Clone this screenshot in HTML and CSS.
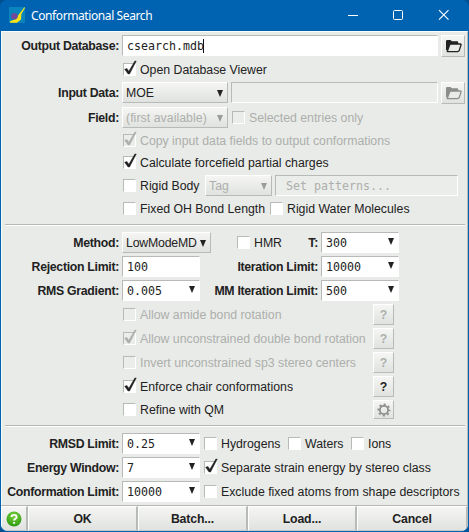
FILE: index.html
```html
<!DOCTYPE html>
<html lang="en">
<head>
<meta charset="utf-8">
<title>Conformational Search</title>
<link rel="stylesheet" href="styles.css">
</head>
<body>
<svg class="defs" width="0" height="0">
  <symbol id="tick" viewBox="0 0 14 15"><path d="M1.6 9.2 L4 8.4 L5.8 11.2 L11.8 1 L13.3 1 L6.6 14 L5 14 Z" fill="currentColor" stroke="currentColor" stroke-width=".4"/></symbol>
  <symbol id="folder" viewBox="0 0 17 14"><path d="M1 11 V2.2 Q1 1 2.2 1 H5.4 L7 2.3 H12.2 Q13.2 2.3 13.2 3.6 V5 H5.2 L2.4 11.8 Z" fill="currentColor"/><path d="M5 5 H15.4 Q16.4 5 16 6 L14.2 11.6 Q13.8 12.6 12.6 12.6 H2.2 Z" fill="#e9ebe8" stroke="currentColor" stroke-width="1.3" stroke-linejoin="round"/></symbol>
</svg>
<div class="window">
  <header class="titlebar">
    <svg class="logo" width="16" height="16" viewBox="0 0 16 16"><rect width="16" height="16" rx="1" fill="#0a84bd"/><path d="M15.6 0 L9.4 8 L7 12 L1 14.2 V15.8 H8 L12 12.5 L12.4 7 L16 1 Z" fill="#fbe416"/><circle cx="5.4" cy="9.3" r="3.3" fill="#704b9b"/></svg>
    <span class="title">Conformational Search</span>
    <svg class="winctl" width="104" height="14" viewBox="0 0 104 14" fill="none" stroke="#fff"><path d="M1 7.5 H11"/><rect x="46.5" y="2.5" width="9" height="9" rx="1"/><path d="M92 2.2 L101.5 11.7 M101.5 2.2 L92 11.7" stroke-width="1.1"/></svg>
  </header>
  <main class="form">
    <div class="row"><b class="label">Output Database:</b><div class="field wide">csearch.mdb<i class="caret"></i></div><button class="btn browse"><svg width="17" height="14"><use href="#folder"/></svg></button></div>
    <div class="row lone"><label class="check"><i class="box"><svg><use href="#tick"/></svg></i><span>Open Database Viewer</span></label></div>
    <div class="row"><b class="label">Input Data:</b><div class="btn select">MOE<i class="arrow"></i></div><div class="field off source"></div><button class="btn browse off"><svg width="17" height="14"><use href="#folder"/></svg></button></div>
    <div class="row"><b class="label">Field:</b><div class="btn select off first">(first available)<i class="arrow"></i></div><label class="check off selected"><i class="box"></i><span>Selected entries only</span></label></div>
    <div class="row lone"><label class="check off"><i class="box"><svg><use href="#tick"/></svg></i><span>Copy input data fields to output conformations</span></label></div>
    <div class="row lone"><label class="check"><i class="box"><svg><use href="#tick"/></svg></i><span>Calculate forcefield partial charges</span></label></div>
    <div class="row lone"><label class="check rigid"><i class="box"></i><span>Rigid Body</span></label><div class="btn select tag off">Tag<i class="arrow"></i></div><div class="field off patterns">Set patterns...</div></div>
    <div class="row lone"><label class="check bond"><i class="box"></i><span>Fixed OH Bond Length</span></label><label class="check"><i class="box"></i><span>Rigid Water Molecules</span></label></div>
    <hr>
    <div class="row pair"><b class="label">Method:</b><div class="btn select method">LowModeMD<i class="arrow"></i></div><label class="check hmr"><i class="box"></i><span>HMR</span></label><b class="label second">T:</b><div class="field num">300<i class="arrow"></i></div></div>
    <div class="row pair"><b class="label">Rejection Limit:</b><div class="field num">100</div><b class="label second">Iteration Limit:</b><div class="field num">10000<i class="arrow"></i></div></div>
    <div class="row pair"><b class="label">RMS Gradient:</b><div class="field num">0.005<i class="arrow"></i></div><b class="label second">MM Iteration Limit:</b><div class="field num">500<i class="arrow"></i></div></div>
    <div class="row lone option"><label class="check off"><i class="box"></i><span>Allow amide bond rotation</span></label><button class="btn help off">?</button></div>
    <div class="row lone option"><label class="check off"><i class="box"><svg><use href="#tick"/></svg></i><span>Allow unconstrained double bond rotation</span></label><button class="btn help off">?</button></div>
    <div class="row lone option"><label class="check off"><i class="box"></i><span>Invert unconstrained sp3 stereo centers</span></label><button class="btn help off">?</button></div>
    <div class="row lone option"><label class="check"><i class="box"><svg><use href="#tick"/></svg></i><span>Enforce chair conformations</span></label><button class="btn help">?</button></div>
    <div class="row lone option"><label class="check"><i class="box"></i><span>Refine with QM</span></label><button class="btn help gear"><svg width="14" height="14" viewBox="-7 -7 14 14" fill="none" stroke="#8d8f8c"><circle r="4.1" stroke-width="1.8"/><circle r="5.7" stroke-width="1.6" stroke-dasharray="2.2 2.277" stroke-dashoffset="1.1"/></svg></button></div>
    <hr>
    <div class="row"><b class="label">RMSD Limit:</b><div class="field num">0.25<i class="arrow"></i></div><label class="check after hyd"><i class="box"></i><span>Hydrogens</span></label><label class="check wat"><i class="box"></i><span>Waters</span></label><label class="check"><i class="box"></i><span>Ions</span></label></div>
    <div class="row"><b class="label">Energy Window:</b><div class="field num">7<i class="arrow"></i></div><label class="check after"><i class="box"><svg><use href="#tick"/></svg></i><span>Separate strain energy by stereo class</span></label></div>
    <div class="row"><b class="label">Conformation Limit:</b><div class="field num">10000<i class="arrow"></i></div><label class="check after"><i class="box"></i><span>Exclude fixed atoms from shape descriptors</span></label></div>
  </main>
  <footer class="actions">
    <button><svg width="16" height="16" viewBox="0 0 16 16"><defs><radialGradient id="g" cx=".5" cy=".3" r=".7"><stop offset="0" stop-color="#7cd33c"/><stop offset="1" stop-color="#2c9a12"/></radialGradient></defs><circle cx="8" cy="8" r="7.5" fill="url(#g)"/><path d="M5.5 6.1 Q5.5 3.9 8 3.9 Q10.6 3.9 10.6 6 Q10.6 7.2 9.2 7.9 Q8.1 8.5 8.1 9.6 M8.1 10.9 V12.7" fill="none" stroke="#fff" stroke-width="1.9"/></svg></button>
    <button>OK</button><button>Batch...</button><button>Load...</button><button>Cancel</button>
  </footer>
</div>
</body>
</html>
```
FILE: styles.css
```css
* { box-sizing: border-box; }
body { margin: 0; background: #004f8f; overflow: hidden; }
.defs { position: absolute; }
.window {
  width: 469px; height: 532px; padding: 0 1px 1px;
  background: #0063b1; border-radius: 7px; overflow: hidden;
  font: 12.3px/22px "Liberation Sans", sans-serif; color: #222;
}
.titlebar { height: 31px; display: flex; align-items: center; padding: 0 17px 1px 8px; color: #fff; }
.title { font: 12px/16px "Noto Sans", sans-serif; letter-spacing: -.4px; margin: 1px 0 0 6px; }
.winctl { margin-left: auto; }
.form {
  display: grid; align-items: start; height: 474px; padding-top: 3px;
  grid-template-rows: 24px 23px 25px 23px 22px 23px 23px 26px 8px repeat(6, 24px) 23px 26px 8px repeat(3, 24px);
  background: #e9ebe8; border: solid #fafbfa; border-width: 1px 0 0 1px;
  border-right: 1px solid #b9bbb8;
}
.row { display: flex; height: 21px; margin-left: -2px; white-space: nowrap; }
.lone { padding-left: 122px; }
.pair { width: 399px; }
.option { width: 394px; }
hr { margin: 0 2px 0 3px; border: 0; height: 2px; border-top: 1px solid #b5b7b4; background: #fff; }
.label { width: 119px; margin-right: 3px; text-align: right; flex: none; letter-spacing: -.3px; }
.second { width: auto; margin-left: auto; }
.field, .btn { height: 21px; flex: none; }
.field {
  position: relative; padding-left: 4px; background: #fefffe; border: solid; border-width: 1px;
  border-color: #b8bab7 #fefffe #fefffe #b8bab7;
  font: 11.63px/21px "DejaVu Sans Mono", monospace;
}
.field.off { background: #ebedea; color: #adafac; }
.wide { width: 316px; }
.source { width: 207px; margin-left: 3px; }
.num { width: 78px; }
.patterns { width: 183px; margin-left: 3px; padding-left: 10px; }
.caret { display: inline-block; width: 1px; height: 14px; background: #111; vertical-align: -3px; margin-left: -1px; }
.btn {
  position: relative; padding: 0; color: #222;
  font: 12.3px/20px "Liberation Sans", sans-serif;
  background: linear-gradient(#f5f6f4, #e0e2df);
  border: 1px solid; border-color: #fff #b8bab7 #b8bab7 #fff;
}
.browse { width: 24px; height: 22px; margin-left: 3px; display: grid; place-items: center; }
.browse.off { color: #8b8d8a; }
.select { width: 106px; padding-left: 3px; }
.select.off, .help.off, .check.off { color: #adafac; }
.first { letter-spacing: .05px; }
.tag { width: 67px; }
.method { width: 89px; letter-spacing: -.2px; }
.arrow {
  position: absolute; right: 4px; top: 7px; border: 3px solid transparent;
  border-top: 7px solid #222; border-bottom: 0;
}
.field .arrow { top: 5px; right: 4px; }
.off .arrow { border-top-color: #9b9d9a; }
.help { width: 21px; font-weight: bold; }
.option .btn { margin-left: auto; }
.gear { height: 19px; margin-top: 1px; display: grid; place-items: center; }
.check { display: flex; flex: none; padding-left: 1px; }
.box {
  position: relative; width: 13px; height: 13px; margin: 4px 4px 0 0; background: #fff;
  border: 1px solid; border-color: #b8bab7 #fff #fff #b8bab7; flex: none;
}
.off .box { background: #ebedea; }
.box svg { position: absolute; left: -1px; top: -4px; width: 14px; height: 15px; }
.selected { margin-left: 3px; }
.rigid { width: 83px; }
.bond { width: 147px; }
.hmr { margin-left: 25px; }
.after { margin-left: 3px; }
.hyd { width: 84px; }
.wat { width: 63px; }
.actions { display: grid; grid-template-columns: 27px 110px 110px 109px 1fr; height: 26px; border-top: 1px solid #b5b7b4; background: #e9ebe8; border-radius: 0 0 7px 7px; overflow: hidden; }
.actions button {
  padding: 0; font: bold 12.3px/20px "Liberation Sans", sans-serif; color: #222; letter-spacing: -.15px;
  background: linear-gradient(#f5f6f4, #e0e2df); border: solid; border-width: 1px 2px 1px 1px;
  border-color: #fff #b8bab7 #c8cac7 #fff;
  display: grid; place-items: center;
}
```
